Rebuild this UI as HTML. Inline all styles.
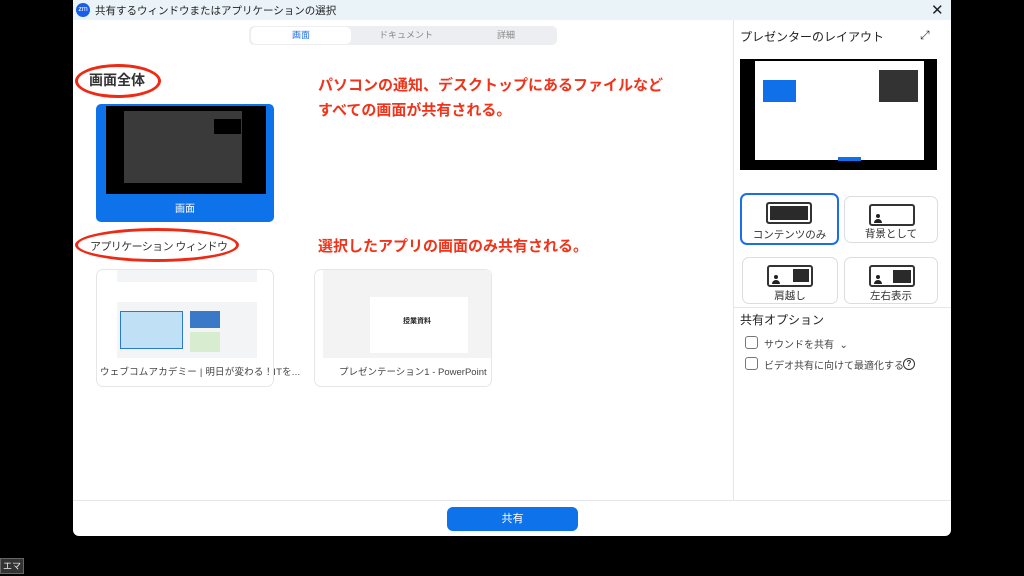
<!DOCTYPE html>
<html><head><meta charset="utf-8"><style>
*{margin:0;padding:0;box-sizing:border-box}
body{width:1024px;height:576px;background:#000;position:relative;overflow:hidden;font-family:"Liberation Sans","Noto Sans CJK JP",sans-serif;color:#222}
.a{position:absolute}
.win{left:73px;top:0;width:878px;height:536px;background:#fff;border-radius:0 0 6px 6px;overflow:hidden}
.red{color:#f0341c;font-weight:bold;font-size:15px}
.ell{border:3px solid #ee2a14;border-radius:50%}
.card{border:1px solid #e4e6ea;border-radius:7px;background:#fff}
.lb{border:1px solid #dcdde0;border-radius:7px;background:#fff;font-size:10.5px;text-align:center;color:#333}
.ic{position:absolute;left:24px;top:7px;width:46px;height:22px;border:2px solid #333;border-radius:3px;background:#fff}
.ph{position:absolute;left:5px;top:8px;width:4px;height:4px;border-radius:50%;background:#222}
.pb{position:absolute;left:3px;top:13px;width:8px;height:4px;border-radius:4px 4px 0 0;background:#222}
.cb{width:13px;height:13px;border:1px solid #777;border-radius:3px}
</style></head><body>
<div class="a win">
 <div class="a" style="left:0;top:0;width:878px;height:20px;background:#eaf3f8"></div>
 <div class="a" style="left:3px;top:3px;width:14px;height:14px;border-radius:50%;background:#1a5ee8;color:#fff;font-size:7px;line-height:14px;text-align:center">zm</div>
 <div class="a" style="left:22px;top:3px;font-size:10.5px">共有するウィンドウまたはアプリケーションの選択</div>
 <div class="a" style="left:858px;top:1px;font-size:15px">✕</div>
 <div class="a" style="left:176px;top:26px;width:308px;height:19px;background:#eceef2;border-radius:5px"></div>
 <div class="a" style="left:178px;top:27px;width:100px;height:17px;background:#fff;border-radius:5px;font-size:9px;color:#1a6ee8;text-align:center;line-height:17px">画面</div>
 <div class="a" style="left:283px;top:27px;width:100px;font-size:9px;color:#888;text-align:center;line-height:17px">ドキュメント</div>
 <div class="a" style="left:383px;top:27px;width:100px;font-size:9px;color:#888;text-align:center;line-height:17px">詳細</div>
 <div class="a ell" style="left:2px;top:64px;width:86px;height:34px"></div>
 <div class="a" style="left:16px;top:70px;font-size:14px;font-weight:bold;color:#333">画面全体</div>
 <div class="a red" style="left:245px;top:73px;line-height:25px">パソコンの通知、デスクトップにあるファイルなど<br>すべての画面が共有される。</div>
 <div class="a" style="left:23px;top:104px;width:178px;height:118px;background:#0e72ea;border-radius:5px"></div>
 <div class="a" style="left:33px;top:106px;width:160px;height:88px;background:#000"></div>
 <div class="a" style="left:51px;top:111px;width:118px;height:72px;background:#3a3a3a"></div>
 <div class="a" style="left:141px;top:119px;width:27px;height:15px;background:#000"></div>
 <div class="a" style="left:23px;top:200px;width:178px;text-align:center;font-size:10px;color:#fff">画面</div>
 <div class="a ell" style="left:2px;top:228px;width:164px;height:34px"></div>
 <div class="a" style="left:17px;top:238px;font-size:11px;color:#333;letter-spacing:-0.6px">アプリケーション ウィンドウ</div>
 <div class="a red" style="left:245px;top:235px">選択したアプリの画面のみ共有される。</div>
 <div class="a card" style="left:23px;top:269px;width:178px;height:118px"></div>
 <div class="a" style="left:44px;top:270px;width:140px;height:88px;background:#f3f4f6"></div>
 <div class="a" style="left:44px;top:282px;width:140px;height:20px;background:#fff"></div>
 <div class="a" style="left:47px;top:311px;width:63px;height:38px;background:#bfe0f5;border:1px solid #2a7ad0"></div>
 <div class="a" style="left:117px;top:311px;width:30px;height:17px;background:#3a78c8"></div>
 <div class="a" style="left:117px;top:332px;width:30px;height:20px;background:#d8ecd0"></div>
 <div class="a" style="left:27px;top:364px;font-size:9.5px;color:#444;letter-spacing:0.2px">ウェブコムアカデミー | 明日が変わる！ITを...</div>
 <div class="a card" style="left:241px;top:269px;width:178px;height:118px"></div>
 <div class="a" style="left:250px;top:270px;width:168px;height:88px;background:#f3f3f3"></div>
 <div class="a" style="left:297px;top:297px;width:98px;height:56px;background:#fff"></div>
 <div class="a" style="left:330px;top:316px;font-size:7px;font-weight:bold">授業資料</div>
 <div class="a" style="left:266px;top:364px;font-size:9.5px;color:#444">プレゼンテーション1 - PowerPoint</div>
 <div class="a" style="left:660px;top:20px;width:1px;height:480px;background:#e4e6ea"></div>
 <div class="a" style="left:667px;top:28px;font-size:12px;color:#222">プレゼンターのレイアウト</div>
 <div class="a" style="left:847px;top:28px;font-size:12px;color:#333">⤢</div>
 <div class="a" style="left:667px;top:59px;width:197px;height:111px;background:#000"></div>
 <div class="a" style="left:682px;top:61px;width:169px;height:99px;background:#fff"></div>
 <div class="a" style="left:690px;top:80px;width:33px;height:22px;background:#1070ea"></div>
 <div class="a" style="left:806px;top:70px;width:39px;height:32px;background:#333"></div>
 <div class="a" style="left:765px;top:157px;width:23px;height:4px;background:#1070ea"></div>
 <div class="a lb" style="left:667px;top:193px;width:99px;height:52px;border:2px solid #1a6ee8"><div class="ic" style="background:#2a2a2a;box-shadow:inset 0 0 0 2px #fff"></div><div class="a" style="left:0;top:32px;width:95px">コンテンツのみ</div></div>
 <div class="a lb" style="left:771px;top:196px;width:94px;height:47px"><div class="ic"><div class="ph"></div><div class="pb"></div></div><div class="a" style="left:0;top:29px;width:92px">背景として</div></div>
 <div class="a lb" style="left:669px;top:257px;width:96px;height:47px"><div class="ic"><div class="ph"></div><div class="pb"></div><div class="a" style="left:24px;top:2px;width:16px;height:13px;background:#2a2a2a"></div></div><div class="a" style="left:0;top:30px;width:94px">肩越し</div></div>
 <div class="a lb" style="left:771px;top:257px;width:94px;height:47px"><div class="ic"><div class="ph"></div><div class="pb"></div><div class="a" style="left:22px;top:3px;width:18px;height:13px;background:#2a2a2a"></div></div><div class="a" style="left:0;top:30px;width:92px">左右表示</div></div>
 <div class="a" style="left:660px;top:307px;width:218px;height:1px;background:#e4e6ea"></div>
 <div class="a" style="left:667px;top:311px;font-size:12px">共有オプション</div>
 <div class="a cb" style="left:672px;top:336px"></div>
 <div class="a" style="left:691px;top:336px;font-size:10px;color:#444">サウンドを共有 &nbsp;⌄</div>
 <div class="a cb" style="left:672px;top:357px"></div>
 <div class="a" style="left:691px;top:357px;font-size:10px;color:#444">ビデオ共有に向けて最適化する</div>
 <div class="a" style="left:830px;top:358px;width:12px;height:12px;border:1.5px solid #333;border-radius:50%;font-size:8px;text-align:center;line-height:10px;font-weight:bold">?</div>
 <div class="a" style="left:0;top:500px;width:878px;height:1px;background:#e4e6ea"></div>
 <div class="a" style="left:374px;top:507px;width:131px;height:24px;background:#0e72ea;border-radius:6px;color:#fff;font-size:11px;text-align:center;line-height:24px">共有</div>
</div>
<div class="a" style="left:0;top:558px;width:24px;height:16px;background:#333;border:1px solid #666;color:#eee;font-size:9px;text-align:center;line-height:14px">エマ</div>
</body></html>
